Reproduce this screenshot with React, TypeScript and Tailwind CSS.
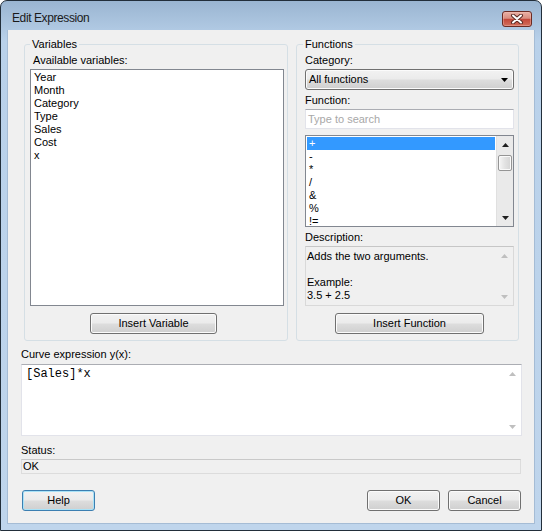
import React from 'react';

const variables = ['Year', 'Month', 'Category', 'Type', 'Sales', 'Cost', 'x'];
const functions = ['+', '-', '*', '/', '&', '%', '!='];

function Arrow({ dir, color }: { dir: 'up' | 'down'; color: string }) {
    return (
        <svg width="7" height="4" viewBox="0 0 7 4">
            <path d={dir === 'up' ? 'M0 4L3.5 0L7 4Z' : 'M0 0L3.5 4L7 0Z'} fill={color} />
        </svg>
    );
}

function Button({ label, primary = false, className = '' }: { label: string; primary?: boolean; className?: string }) {
    return (
        <div
            className={`h-[21px] flex items-center justify-center rounded-[3px] border bg-[linear-gradient(to_bottom,#f2f2f2_0%,#ebebeb_48%,#dddddd_52%,#cfcfcf_100%)] ${
                primary
                    ? 'border-[#3c7fb1] shadow-[inset_0_0_0_1px_#a9e2f7]'
                    : 'border-[#707070] shadow-[inset_0_0_0_1px_#fbfbfb]'
            } ${className}`}
        >
            {label}
        </div>
    );
}

function DisabledScroll({ className = '' }: { className?: string }) {
    return (
        <div className={`w-[17px] flex flex-col justify-between ${className}`}>
            <div className="h-[17px] flex items-center justify-center">
                <Arrow dir="up" color="#bfbfbf" />
            </div>
            <div className="h-[17px] flex items-center justify-center">
                <Arrow dir="down" color="#bfbfbf" />
            </div>
        </div>
    );
}

export default function App() {
    return (
        <div className="w-[542px] h-[531px] flex flex-col border border-[#222e3a] rounded-t-[7px] bg-[linear-gradient(to_bottom,#9ab5d1_0px,#b9d1ea_40px,#bfd5ec_100%)] font-['Liberation_Sans',Arial,sans-serif] text-[11px] leading-[13px] text-black overflow-hidden">
            {/* Title bar */}
            <div className="h-[29px] flex items-start justify-between pl-[11px] pr-[9px]">
                <div className="pt-[10px] text-[12px] leading-[15px] tracking-[-0.4px] text-[#1a1a1a]">Edit Expression</div>
                <div className="mt-[10px] w-[30px] h-[16px] rounded-[3px] border border-[#6b2b23] bg-[linear-gradient(to_bottom,#eab0a5_0%,#d98e80_45%,#c4483a_52%,#d26f5c_100%)] shadow-[inset_0_0_0_1px_#f2c4ba66] flex items-center justify-center">
                    <svg width="14" height="10" viewBox="0 0 14 10">
                        <path d="M3 1.5L11 8.5M11 1.5L3 8.5" stroke="#5a2a24" strokeWidth="4" strokeLinecap="round" />
                        <path d="M3 1.5L11 8.5M11 1.5L3 8.5" stroke="#ffffff" strokeWidth="2" strokeLinecap="round" />
                    </svg>
                </div>
            </div>

            {/* Frame + client */}
            <div className="flex-1 flex px-[6px] pb-[6px]">
                <div className="flex-1 flex flex-col bg-[#f0f0f0] border-x border-b border-[#a5bcd5]">
                    {/* Groups */}
                    <div className="flex gap-[8px] mt-[8px] ml-[16px]">
                        <fieldset className="w-[264px] border border-[#d5dfe5] rounded-[3px] pl-[5px] pr-[3px] pt-[3px] pb-[6px] flex flex-col">
                            <legend className="px-[2px] leading-[13px]">Variables</legend>
                            <div className="pl-[3px]">Available variables:</div>
                            <div className="mt-[2px] h-[237px] border border-[#828790] bg-white pt-[1px] pl-[3px]">
                                {variables.map((v) => (
                                    <div key={v} className="h-[13px]">{v}</div>
                                ))}
                            </div>
                            <Button label="Insert Variable" className="mt-[7px] ml-[60px] w-[127px]" />
                        </fieldset>

                        <fieldset className="w-[223px] border border-[#d5dfe5] rounded-[3px] pl-[6px] pr-[4px] pt-[3px] pb-[6px]">
                            <legend className="px-[2px] leading-[13px]">Functions</legend>
                            <div className="pl-[2px] flex flex-col">
                                <div>Category:</div>
                                <div className="mt-[2px] h-[21px] rounded-[3px] border border-[#707070] shadow-[inset_0_0_0_1px_#fbfbfb] bg-[linear-gradient(to_bottom,#f2f2f2_0%,#ebebeb_48%,#dddddd_52%,#cfcfcf_100%)] flex items-center justify-between pl-[3px] pr-[5px]">
                                    <span>All functions</span>
                                    <Arrow dir="down" color="#000000" />
                                </div>
                                <div className="mt-[4px]">Function:</div>
                                <div className="mt-[2px] h-[20px] border border-[#e2e3ea] border-t-[#abadb3] bg-white flex items-center pl-[2px] text-[#a8a8a8]">
                                    Type to search
                                </div>
                                <div className="mt-[6px] h-[92px] border border-[#828790] bg-white flex overflow-hidden">
                                    <div className="flex-1 pt-[1px] pl-[1px] pr-[1px]">
                                        {functions.map((f, i) => (
                                            <div
                                                key={f}
                                                className={`h-[13px] pl-[2px] ${i === 0 ? 'bg-[#3399ff] text-white' : ''}`}
                                            >
                                                {f}
                                            </div>
                                        ))}
                                    </div>
                                    <div className="w-[17px] flex flex-col bg-[#eaeaea] border-l border-[#e0e0e0]">
                                        <div className="h-[17px] flex items-center justify-center">
                                            <Arrow dir="up" color="#202020" />
                                        </div>
                                        <div className="mt-[2px] mx-[1px] h-[16px] rounded-[2px] border border-[#959595] bg-[linear-gradient(to_right,#f6f6f6,#e2e2e2_50%,#d4d4d4)] shadow-[inset_0_0_0_1px_#fafafa]" />
                                        <div className="flex-1" />
                                        <div className="h-[17px] flex items-center justify-center">
                                            <Arrow dir="down" color="#202020" />
                                        </div>
                                    </div>
                                </div>
                                <div className="mt-[4px]">Description:</div>
                                <div className="mt-[2px] h-[60px] border border-[#d9d9d9] border-t-[#c6c6c6] bg-[#f0f0f0] flex">
                                    <div className="flex-1 pt-[3px] pl-[1px]">
                                        <div>Adds the two arguments.</div>
                                        <div className="h-[13px]" />
                                        <div>Example:</div>
                                        <div>3.5 + 2.5</div>
                                    </div>
                                    <DisabledScroll />
                                </div>
                                <div className="mt-[7px] flex justify-center">
                                    <Button label="Insert Function" className="w-[149px]" />
                                </div>
                            </div>
                        </fieldset>
                    </div>

                    {/* Expression */}
                    <div className="ml-[13px] mt-[7px]">Curve expression y(x):</div>
                    <div className="ml-[13px] mt-[3px] w-[501px] h-[72px] border border-[#e2e3ea] border-t-[#abadb3] bg-white flex">
                        <div className="flex-1 pt-[2px] pl-[4px] font-['Liberation_Mono','Courier_New',monospace] text-[12px] leading-[14px]">
                            [Sales]*x
                        </div>
                        <DisabledScroll />
                    </div>

                    {/* Status */}
                    <div className="ml-[13px] mt-[8px]">Status:</div>
                    <div className="ml-[13px] mt-[2px] w-[500px] h-[15px] border border-[#dcdcdc] border-t-[#c9c9c9] bg-[#f0f0f0] pl-[1px] leading-[12px]">
                        OK
                    </div>

                    {/* Buttons */}
                    <div className="mt-[16px] flex items-center pl-[14px] pr-[13px]">
                        <Button label="Help" primary className="w-[73px]" />
                        <div className="flex-1" />
                        <Button label="OK" className="w-[73px]" />
                        <Button label="Cancel" className="w-[73px] ml-[8px]" />
                    </div>
                </div>
            </div>
        </div>
    );
}
